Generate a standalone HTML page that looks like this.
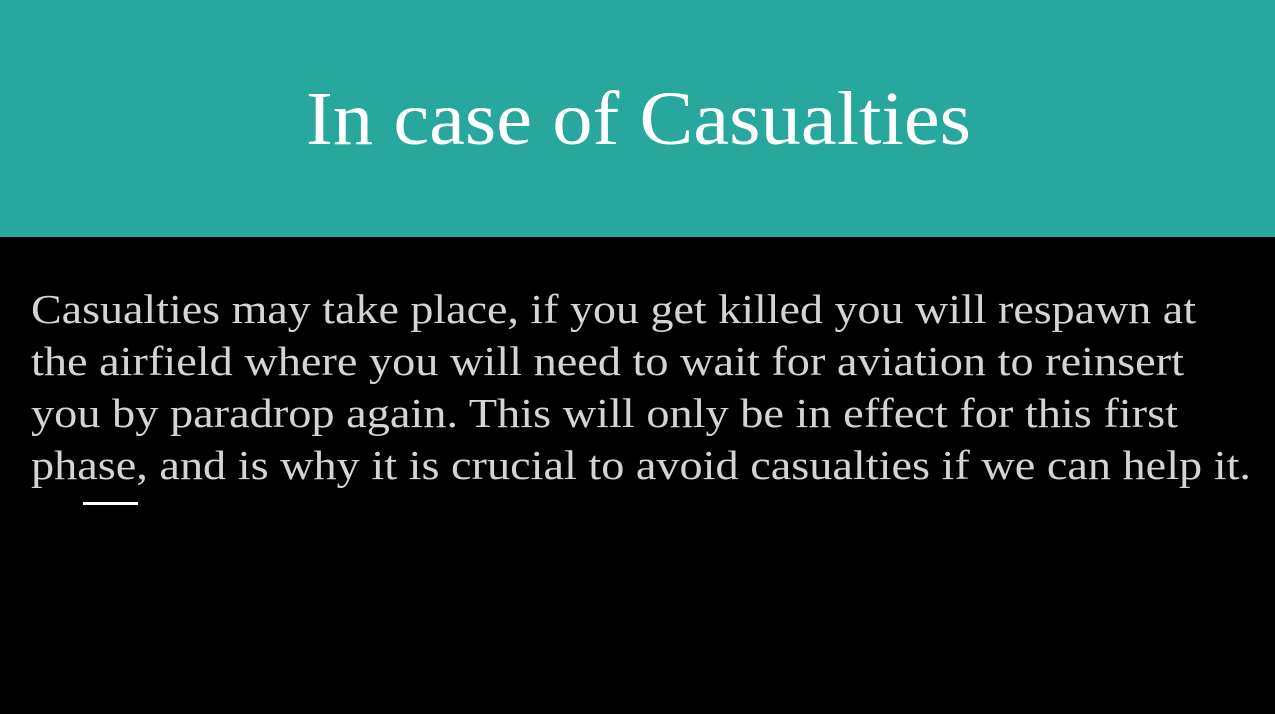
<!DOCTYPE html>
<html><head><meta charset="utf-8"><style>
html,body{margin:0;padding:0;background:#000;width:1275px;height:714px;overflow:hidden}
svg{display:block}
</style></head><body>
<svg width="1275" height="714" xmlns="http://www.w3.org/2000/svg">
<rect x="0" y="0" width="1275" height="714" fill="#000"/>
<rect x="0" y="0" width="1275" height="237" fill="#28a79c"/>
<text x="306" y="144" font-family="Liberation Serif, serif" font-size="76" fill="#fff" textLength="665" lengthAdjust="spacingAndGlyphs">In case of Casualties</text>
<g font-family="Liberation Serif, serif" font-size="41" fill="#d4d4d4">
<text x="31" y="323" textLength="1165" lengthAdjust="spacingAndGlyphs">Casualties may take place, if you get killed you will respawn at</text>
<text x="31" y="375" textLength="1153" lengthAdjust="spacingAndGlyphs">the airfield where you will need to wait for aviation to reinsert</text>
<text x="31" y="427" textLength="1147" lengthAdjust="spacingAndGlyphs">you by paradrop again. This will only be in effect for this first</text>
<text x="31" y="479" textLength="1220" lengthAdjust="spacingAndGlyphs">phase, and is why it is crucial to avoid casualties if we can help it.</text>
</g>
<rect x="83" y="502" width="55" height="3" fill="#fff"/>
</svg>
</body></html>
